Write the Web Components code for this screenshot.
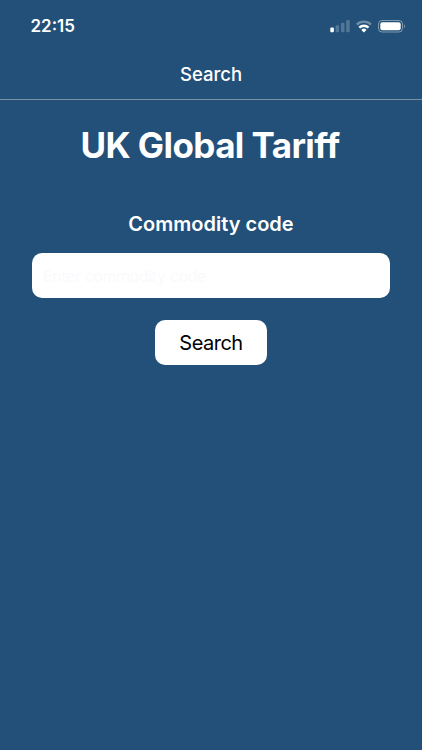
<!DOCTYPE html>
<html lang="en"><head><meta charset="utf-8"><title>UK Global Tariff</title>
<style>html,body{margin:0;height:100%;background:#225078}</style></head><body>
<tariff-app></tariff-app>
<script>
const define=(n,html)=>customElements.define(n,class extends HTMLElement{constructor(){super();this.attachShadow({mode:'open'}).innerHTML=html}});
define('status-bar',`<style>:host{display:flex;justify-content:space-between;height:49px;padding:16px 16px 0 30.5px;box-sizing:border-box}
time{font:600 17px/20px Inter,sans-serif}svg{display:block}</style>
<time>22:15</time>
<svg width="76" height="20" viewBox="330 16 76 20"><g fill="#fff"><rect x="330.300" y="27.500" width="3.600" height="4.800" rx="1"/><g opacity=".22"><rect x="335.600" y="25.300" width="3.500" height="7" rx="1"/><rect x="341" y="22.800" width="3.500" height="9.500" rx="1"/><rect x="346.200" y="20" width="3.500" height="12.300" rx="1"/></g></g>
<g fill="none" stroke="#fff" stroke-width="2.400"><path d="M356.800 24.600a10 10 0 0 1 14.200 0" opacity=".35"/><path d="M359.300 27.700a6.500 6.500 0 0 1 9.200 0"/></g><path d="M361.300 29.900a3.700 3.700 0 0 1 5.200 0L363.900 32.600z" fill="#fff"/>
<rect x="378.500" y="20.500" width="24" height="11.500" rx="3.500" fill="none" stroke="#fff" stroke-opacity=".42"/><rect x="380.300" y="22.200" width="20.400" height="8.100" rx="2" fill="#fff"/><path d="M404 24.200q2 2 0 4z" fill="#fff" opacity=".45"/></svg>`);
define('nav-bar',`<style>:host{display:flex;box-sizing:border-box;height:51px;padding-top:1px;align-items:center;justify-content:center;border-bottom:1px solid #7891a5;font:500 18.500px/21px Inter,sans-serif}</style><slot></slot>`);
define('search-form',`<style>:host{display:flex;flex-direction:column;align-items:center;padding:24px 32px 0}
h1{margin:0;padding-right:2px;font:700 35px/42px Inter,sans-serif;letter-spacing:-.58px}label{margin-top:45px;font:600 20px/26px Inter,sans-serif}
input{box-sizing:border-box;width:358px;height:45px;margin-top:16px;border:0;border-radius:10px;background:#fff;padding:0 11px;font:16px Inter,sans-serif;letter-spacing:-.4px}
input::placeholder{color:#fafafd;opacity:1}button{width:112px;height:45px;margin-top:22px;border:0;padding:0;border-radius:10px;background:#fff;color:#000;font:400 20px Inter,sans-serif;letter-spacing:-.5px}</style>
<h1>UK Global Tariff</h1><label for="code">Commodity code</label><input id="code" placeholder="Enter commodity code"><button>Search</button>`);
define('tariff-app',`<style>:host{display:block;height:750px;background:#225078;color:#fff}</style><status-bar></status-bar><nav-bar>Search</nav-bar><search-form></search-form>`);
</script></body></html>
